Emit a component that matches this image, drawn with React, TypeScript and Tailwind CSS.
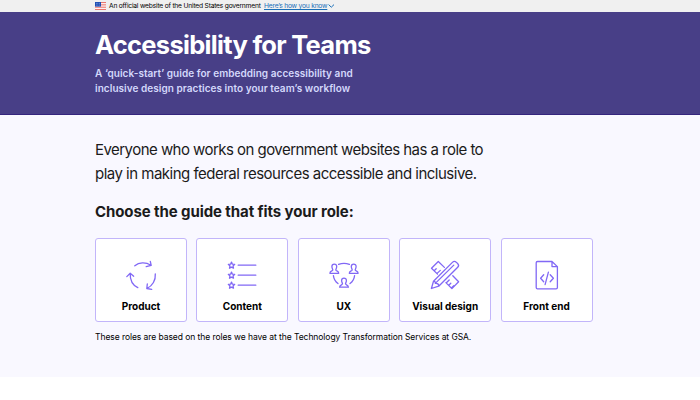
import type { ReactNode } from "react";

function Flag() {
  return (
    <svg width="11" height="8" viewBox="0 0 11 8" className="shrink-0">
      <rect width="11" height="8" fill="#fff" />
      {[0, 2.3, 4.6, 6.9].map((y) => (
        <rect key={y} y={y} width="11" height="1.15" fill="#e8776f" />
      ))}
      <rect width="6" height="4.6" fill="#1e4fb5" />
      <path d="M1 1.4h4M1 3.1h4" stroke="#b9cdf0" strokeWidth="0.6" strokeDasharray="0.7 0.8" />
    </svg>
  );
}

function Icon({ children }: { children: ReactNode }) {
  return (
    <svg
      width="32"
      height="32"
      viewBox="0 0 32 32"
      fill="none"
      stroke="#8168f5"
      strokeWidth="1.3"
      strokeLinecap="round"
      strokeLinejoin="round"
    >
      {children}
    </svg>
  );
}

const person =
  "M-1.5 1.1C-1.5 .4-2.4 -.4-2.4-2.2C-2.4-3.8-1.5-4.6 0-4.6S2.4-3.8 2.4-2.2C2.4-.4 1.5 .4 1.5 1.1C1.5 2.3 4.4 2 4.4 4.5H-4.4C-4.4 2-1.5 2.3-1.5 1.1Z";
const star =
  "M0-3.2L.9-1.1L3.2-.9L1.5.7L2 2.9L0 1.8L-2 2.9L-1.5.7L-3.2-.9L-.9-1.1Z";

const roles: { label: string; icon: ReactNode }[] = [
  {
    label: "Product",
    icon: (
      <Icon>
        <path d="M9.8 6.8C14 3.2 20.4 2.8 26 6.2M25.3 2.4L26.2 6.3L21.2 7.6" />
        <path d="M30.3 15C30.8 21 27.6 26.8 22 29.4M22.3 25L21.8 29.5L26.7 30.4" />
        <path d="M12.8 28.6C7.8 26.2 5 20.5 5.2 14.4M1.8 17.6L5.2 14.3L8.7 17.2" />
      </Icon>
    ),
  },
  {
    label: "Content",
    icon: (
      <Icon>
        {[6.3, 16.3, 26.3].map((y) => (
          <g key={y}>
            <path transform={`translate(5.5 ${y})`} d={star} />
            <path d={`M12.2 ${y - 0.1}H29.8`} />
          </g>
        ))}
      </Icon>
    ),
  },
  {
    label: "UX",
    icon: (
      <Icon>
        <path transform="translate(6.3 9.8)" d={person} />
        <path transform="translate(25.7 9.8)" d={person} />
        <path transform="translate(16 23.7)" d={person} />
        <path d="M10.6 5.4C14 4 18 4 21.4 5.4M5.4 16.6C5.8 20 7.4 22.6 10 24.6M26.6 16.6C26.2 20 24.6 22.6 22 24.6" />
      </Icon>
    ),
  },
  {
    label: "Visual design",
    icon: (
      <Icon>
        <path d="M15.4 8.4L9.3 2.5L2.5 9.2L8.5 15.1M5.2 11.7L7.2 9.7M8.1 14.4L11.3 11.4M23.8 16.8L29.6 22.7L22.9 29.6L16.9 23.6M19.8 26.3L21.8 24.3M22.6 28.8L24.8 26.6M17.4 23.8L20.2 21" />
        <path d="M2.4 29.5L4.5 22.2L23.4 3.4C24.7 2.1 26.3 2.3 27.5 3.4L28.8 4.7C29.9 5.9 29.8 7.2 28.7 8.3L9.7 27.2ZM4.5 22.2C5.5 22 6.4 22.6 6.3 24.4C8.3 24 10 25.1 9.7 27.2M6.3 24.4L24.8 6.1" />
      </Icon>
    ),
  },
  {
    label: "Front end",
    icon: (
      <Icon>
        <path d="M21 2.5H6.5Q5.2 2.5 5.2 3.8V28.5Q5.2 29.8 6.5 29.8H25.1Q26.4 29.8 26.4 28.5V7.6ZM21 2.5V7.6H26.4" />
        <path d="M12.7 15.8L9.6 19.3L12.7 22.8M17.4 13.2L14.1 25.6M19.2 15.8L22.4 19.3L19.2 22.8" />
      </Icon>
    ),
  },
];

export default function App() {
  return (
    <div className="h-[400px] w-[700px] overflow-hidden bg-white font-['Inter',sans-serif] text-[#1b1b1b]">
      <div className="flex h-3 items-center bg-[#f0f0f0] pl-[95px] text-[6.7px] leading-3 tracking-[-0.21px] whitespace-nowrap">
        <Flag />
        <span className="ml-[3px] w-[155px] text-black">An official website of the United States government</span>
        <a href="#" className="w-[63px] text-[#1a6fb8] underline">Here’s how you know</a>
        <svg width="7" height="4" viewBox="0 0 7 4" fill="none" stroke="#1a6fb8" className="ml-px">
          <path d="M.6.6L3.3 3.2L6 .6" />
        </svg>
      </div>
      <header className="h-[103px] border-b border-[#35257d] bg-[#483f87] pt-[17px] pl-[95px] whitespace-nowrap">
        <h1 className="text-[25.5px] leading-8 font-bold tracking-[-0.7px] text-white">Accessibility for Teams</h1>
        <p className="mt-[4.5px] text-[10px] leading-[15.5px] font-semibold tracking-[0.05px] text-[#d4d8fb]">
          A ‘quick-start’ guide for embedding accessibility and
          <br />
          inclusive design practices into your team’s workflow
        </p>
      </header>
      <main className="h-[262px] bg-[#f9f8ff] pt-[23px] pl-[95px] whitespace-nowrap">
        <p className="text-[15px] leading-[23.5px] tracking-[-0.54px]">
          Everyone who works on government websites has a role to
          <br />
          <span className="tracking-[-0.51px]">play in making federal resources accessible and inclusive.</span>
        </p>
        <h2 className="mt-[15px] text-[15px] leading-6 font-bold tracking-[-0.09px]">Choose the guide that fits your role:</h2>
        <div className="mt-[14px] grid w-[497.5px] grid-cols-5 gap-[9.5px]">
          {roles.map((role) => (
            <div
              key={role.label}
              className="flex h-[84px] flex-col items-center rounded-[3px] border border-[#c2b5fa] bg-white pt-5"
            >
              {role.icon}
              <span className="mt-[9px] text-[10px] leading-3 font-bold text-black">{role.label}</span>
            </div>
          ))}
        </div>
        <p className="mt-[9px] text-[8.5px] leading-3 tracking-[-0.065px] text-black">
          These roles are based on the roles we have at the Technology Transformation Services at GSA.
        </p>
      </main>
    </div>
  );
}
